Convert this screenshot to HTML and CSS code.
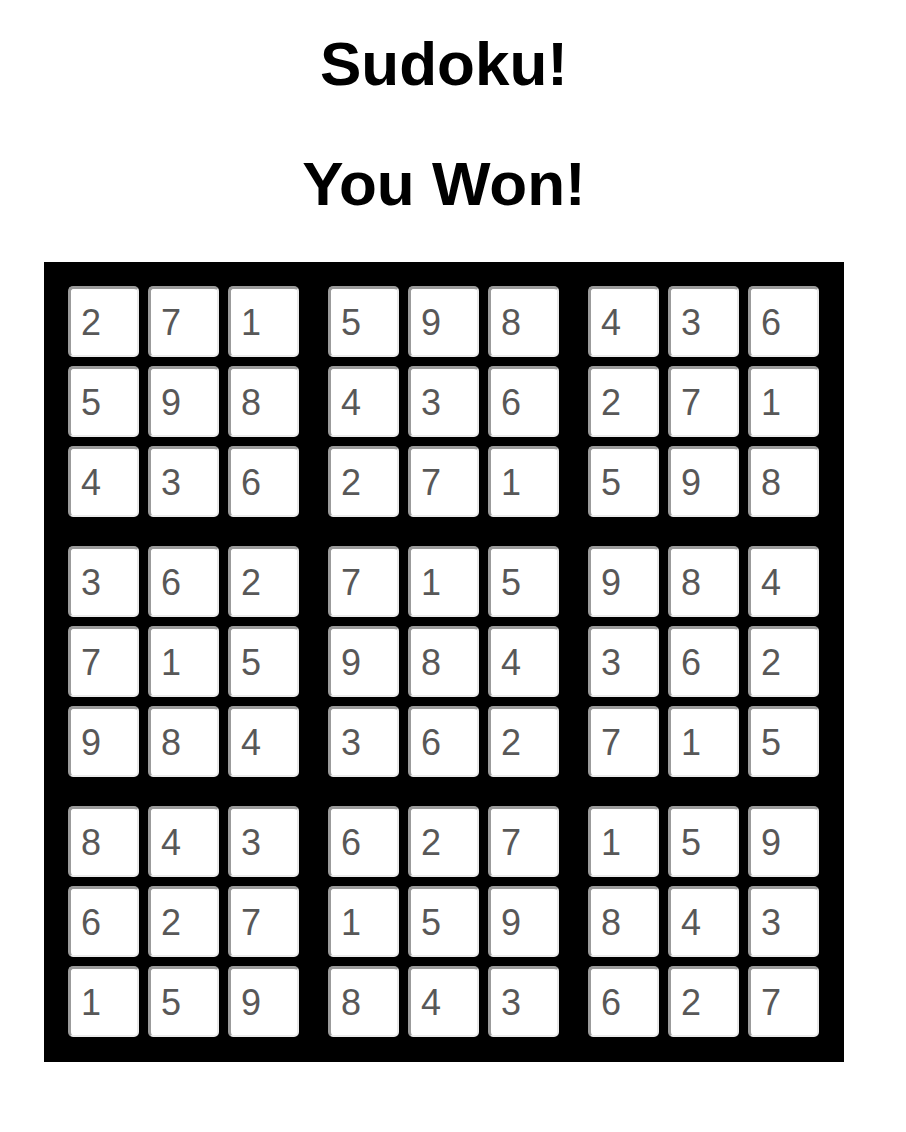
FILE: index.html
```html
<!DOCTYPE html>
<html lang="en">
<head>
<meta charset="utf-8">
<title>Sudoku!</title>
<link rel="stylesheet" href="styles.css">
</head>
<body>
<div class="page">
  <h1 class="title">Sudoku!</h1>
  <h2 class="status">You Won!</h2>
  <div class="board">
    <div class="block"><div class="cell">2</div><div class="cell">7</div><div class="cell">1</div><div class="cell">5</div><div class="cell">9</div><div class="cell">8</div><div class="cell">4</div><div class="cell">3</div><div class="cell">6</div></div>
    <div class="block"><div class="cell">5</div><div class="cell">9</div><div class="cell">8</div><div class="cell">4</div><div class="cell">3</div><div class="cell">6</div><div class="cell">2</div><div class="cell">7</div><div class="cell">1</div></div>
    <div class="block"><div class="cell">4</div><div class="cell">3</div><div class="cell">6</div><div class="cell">2</div><div class="cell">7</div><div class="cell">1</div><div class="cell">5</div><div class="cell">9</div><div class="cell">8</div></div>
    <div class="block"><div class="cell">3</div><div class="cell">6</div><div class="cell">2</div><div class="cell">7</div><div class="cell">1</div><div class="cell">5</div><div class="cell">9</div><div class="cell">8</div><div class="cell">4</div></div>
    <div class="block"><div class="cell">7</div><div class="cell">1</div><div class="cell">5</div><div class="cell">9</div><div class="cell">8</div><div class="cell">4</div><div class="cell">3</div><div class="cell">6</div><div class="cell">2</div></div>
    <div class="block"><div class="cell">9</div><div class="cell">8</div><div class="cell">4</div><div class="cell">3</div><div class="cell">6</div><div class="cell">2</div><div class="cell">7</div><div class="cell">1</div><div class="cell">5</div></div>
    <div class="block"><div class="cell">8</div><div class="cell">4</div><div class="cell">3</div><div class="cell">6</div><div class="cell">2</div><div class="cell">7</div><div class="cell">1</div><div class="cell">5</div><div class="cell">9</div></div>
    <div class="block"><div class="cell">6</div><div class="cell">2</div><div class="cell">7</div><div class="cell">1</div><div class="cell">5</div><div class="cell">9</div><div class="cell">8</div><div class="cell">4</div><div class="cell">3</div></div>
    <div class="block"><div class="cell">1</div><div class="cell">5</div><div class="cell">9</div><div class="cell">8</div><div class="cell">4</div><div class="cell">3</div><div class="cell">6</div><div class="cell">2</div><div class="cell">7</div></div>
  </div>
</div>
</body>
</html>
```

FILE: styles.css
```css
html, body {
  margin: 0;
  padding: 0;
  background: #ffffff;
}

.page {
  width: 888px;
  padding-top: 28px;
  font-family: "Liberation Sans", Arial, Helvetica, sans-serif;
}

.title,
.status {
  margin: 0;
  text-align: center;
  font-size: 62px;
  line-height: 72px;
  font-weight: 700;
  color: #000;
}

.status {
  margin-top: 48px;
}

.board {
  box-sizing: border-box;
  width: 800px;
  height: 800px;
  margin: 42px auto 0;
  padding: 19px 21px 21px 19px;
  background: #000;
  display: grid;
  grid-template-columns: repeat(3, 240px);
  grid-template-rows: repeat(3, 240px);
  gap: 20px;
}

.block {
  box-sizing: border-box;
  padding: 5px;
  display: grid;
  grid-template-columns: repeat(3, 71px);
  grid-template-rows: repeat(3, 71px);
  gap: 9px;
}

.cell {
  box-sizing: border-box;
  width: 71px;
  height: 71px;
  background: #fff;
  border-style: solid;
  border-width: 3px 2px 2px 3px;
  border-color: #9b9b9b #e9e9e9 #ececec #9b9b9b;
  border-radius: 5px;
  display: flex;
  align-items: center;
  padding: 2px 0 0 10px;
  font-family: "Liberation Sans", Arial, Helvetica, sans-serif;
  font-size: 36px;
  color: #585858;
}
```
